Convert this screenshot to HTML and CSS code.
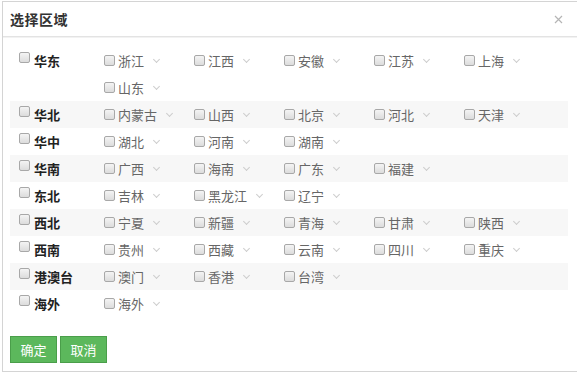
FILE: index.html
```html
<!DOCTYPE html>
<html lang="zh">
<head>
<meta charset="utf-8">
<link rel="stylesheet" href="styles.css">
</head>
<body>
<div class="dialog">
  <div class="dlg-head">
    <span class="dlg-title">选择区域</span>
    <svg class="dlg-close" width="9" height="9" viewBox="0 0 9 9"><path d="M1 1L8 8M8 1L1 8" stroke="#b5b5b5" stroke-width="1.2" fill="none"/></svg>
  </div>
  <div class="dlg-body">
    <div class="row">
      <div class="region"><span class="cb cb-region"></span><b>华东</b></div>
      <div class="provs">
        <div class="prov"><span class="cb"></span>浙江<i class="arr"></i></div>
        <div class="prov"><span class="cb"></span>江西<i class="arr"></i></div>
        <div class="prov"><span class="cb"></span>安徽<i class="arr"></i></div>
        <div class="prov"><span class="cb"></span>江苏<i class="arr"></i></div>
        <div class="prov"><span class="cb"></span>上海<i class="arr"></i></div>
        <div class="prov"><span class="cb"></span>山东<i class="arr"></i></div>
      </div>
    </div>
    <div class="row alt">
      <div class="region"><span class="cb cb-region"></span><b>华北</b></div>
      <div class="provs">
        <div class="prov"><span class="cb"></span>内蒙古<i class="arr"></i></div>
        <div class="prov"><span class="cb"></span>山西<i class="arr"></i></div>
        <div class="prov"><span class="cb"></span>北京<i class="arr"></i></div>
        <div class="prov"><span class="cb"></span>河北<i class="arr"></i></div>
        <div class="prov"><span class="cb"></span>天津<i class="arr"></i></div>
      </div>
    </div>
    <div class="row">
      <div class="region"><span class="cb cb-region"></span><b>华中</b></div>
      <div class="provs">
        <div class="prov"><span class="cb"></span>湖北<i class="arr"></i></div>
        <div class="prov"><span class="cb"></span>河南<i class="arr"></i></div>
        <div class="prov"><span class="cb"></span>湖南<i class="arr"></i></div>
      </div>
    </div>
    <div class="row alt">
      <div class="region"><span class="cb cb-region"></span><b>华南</b></div>
      <div class="provs">
        <div class="prov"><span class="cb"></span>广西<i class="arr"></i></div>
        <div class="prov"><span class="cb"></span>海南<i class="arr"></i></div>
        <div class="prov"><span class="cb"></span>广东<i class="arr"></i></div>
        <div class="prov"><span class="cb"></span>福建<i class="arr"></i></div>
      </div>
    </div>
    <div class="row">
      <div class="region"><span class="cb cb-region"></span><b>东北</b></div>
      <div class="provs">
        <div class="prov"><span class="cb"></span>吉林<i class="arr"></i></div>
        <div class="prov"><span class="cb"></span>黑龙江<i class="arr"></i></div>
        <div class="prov"><span class="cb"></span>辽宁<i class="arr"></i></div>
      </div>
    </div>
    <div class="row alt">
      <div class="region"><span class="cb cb-region"></span><b>西北</b></div>
      <div class="provs">
        <div class="prov"><span class="cb"></span>宁夏<i class="arr"></i></div>
        <div class="prov"><span class="cb"></span>新疆<i class="arr"></i></div>
        <div class="prov"><span class="cb"></span>青海<i class="arr"></i></div>
        <div class="prov"><span class="cb"></span>甘肃<i class="arr"></i></div>
        <div class="prov"><span class="cb"></span>陕西<i class="arr"></i></div>
      </div>
    </div>
    <div class="row">
      <div class="region"><span class="cb cb-region"></span><b>西南</b></div>
      <div class="provs">
        <div class="prov"><span class="cb"></span>贵州<i class="arr"></i></div>
        <div class="prov"><span class="cb"></span>西藏<i class="arr"></i></div>
        <div class="prov"><span class="cb"></span>云南<i class="arr"></i></div>
        <div class="prov"><span class="cb"></span>四川<i class="arr"></i></div>
        <div class="prov"><span class="cb"></span>重庆<i class="arr"></i></div>
      </div>
    </div>
    <div class="row alt">
      <div class="region"><span class="cb cb-region"></span><b>港澳台</b></div>
      <div class="provs">
        <div class="prov"><span class="cb"></span>澳门<i class="arr"></i></div>
        <div class="prov"><span class="cb"></span>香港<i class="arr"></i></div>
        <div class="prov"><span class="cb"></span>台湾<i class="arr"></i></div>
      </div>
    </div>
    <div class="row">
      <div class="region"><span class="cb cb-region"></span><b>海外</b></div>
      <div class="provs">
        <div class="prov"><span class="cb"></span>海外<i class="arr"></i></div>
      </div>
    </div>
  </div>
  <div class="dlg-foot">
    <button class="btn">确定</button>
    <button class="btn">取消</button>
  </div>
</div>
</body>
</html>
```

FILE: styles.css
```css
html, body {
  margin: 0;
  padding: 0;
  background: #fff;
}
body {
  font-family: "Noto Sans CJK SC", "Noto Sans", sans-serif;
  font-size: 13px;
  color: #333;
  overflow: hidden;
}
.dialog {
  margin: 1px 0 0 2px;
  height: 369px;
  border: 1px solid #d4d4d4;
  border-right: none;
  display: flex;
  flex-direction: column;
}
.dlg-head {
  height: 34px;
  border-bottom: 1px solid #e3e3e3;
  box-shadow: 0 1px 0 #f2f2f2;
  display: flex;
  align-items: center;
  justify-content: space-between;
  padding: 0 14px 0 7px;
}
.dlg-title {
  font-size: 14px;
  font-weight: bold;
  color: #333;
  letter-spacing: 0.5px;
}
.dlg-close {
  display: block;
}
.dlg-body {
  padding: 10px 0 0 7px;
  width: 558px;
}
.row {
  display: flex;
  align-items: flex-start;
}
.row.alt {
  background: #f7f7f7;
}
.region {
  width: 94px;
  flex: none;
  box-sizing: border-box;
  padding-left: 9px;
  height: 27px;
  display: flex;
  align-items: center;
}
.region b {
  font-weight: bold;
  color: #222;
  font-size: 13px;
}
.provs {
  display: flex;
  flex-wrap: wrap;
  width: 450px;
}
.prov {
  width: 90px;
  height: 27px;
  display: flex;
  align-items: center;
  color: #666;
  white-space: nowrap;
}
.cb {
  display: inline-block;
  flex: none;
  width: 9px;
  height: 9px;
  border: 1px solid #a8a8a8;
  border-radius: 2px;
  background: linear-gradient(#f4f4f4, #dcdcdc);
  margin-right: 3px;
}
.cb-region {
  margin-right: 4px;
  position: relative;
  top: -3px;
}
.arr {
  display: inline-block;
  width: 4px;
  height: 4px;
  margin-left: 10px;
  border-right: 1px solid #cdcdcd;
  border-bottom: 1px solid #cdcdcd;
  transform: rotate(45deg);
  position: relative;
  top: -1px;
}
.dlg-foot {
  padding: 19px 0 0 7px;
  display: flex;
  gap: 3px;
}
.btn {
  width: 47px;
  height: 27px;
  border: 1px solid #4a9e4a;
  background: #5cb85c;
  color: #fff;
  font-family: "Noto Sans CJK SC", "Noto Sans", sans-serif;
  font-size: 13px;
  padding: 0;
  border-radius: 0;
}
```
